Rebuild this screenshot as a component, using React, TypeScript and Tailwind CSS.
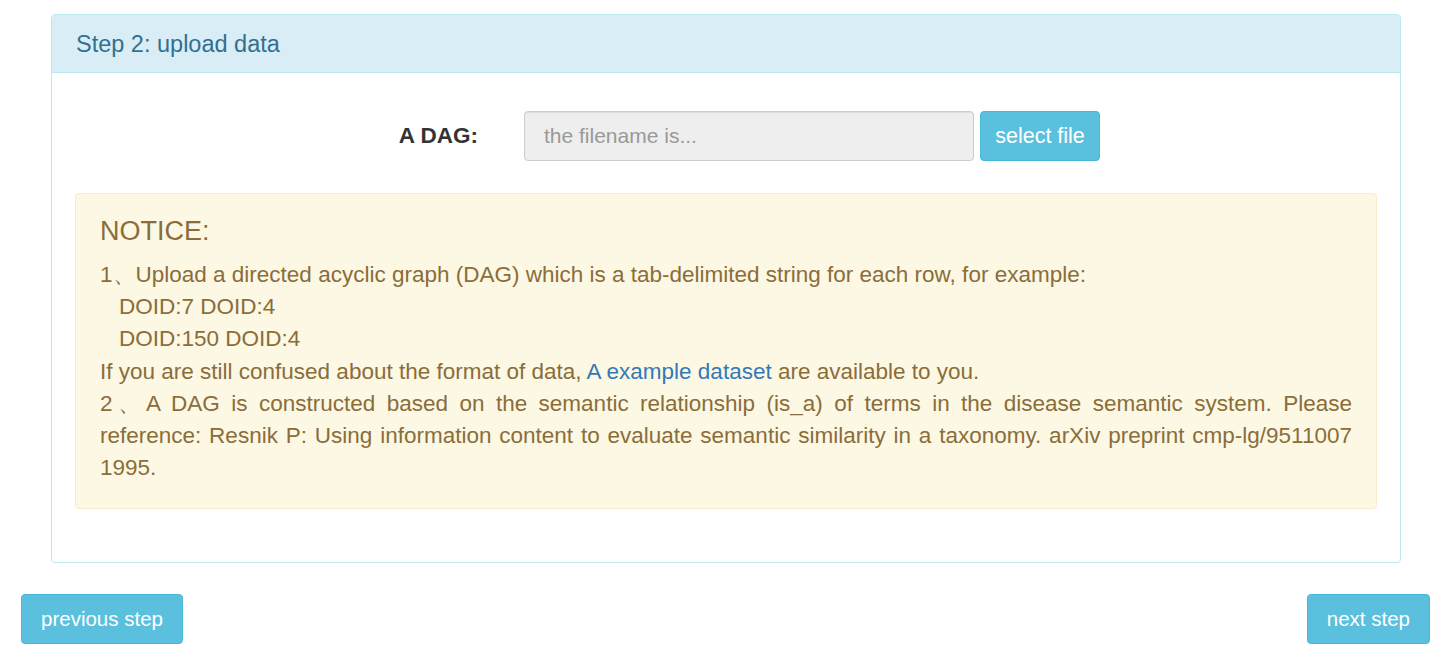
const noticeLines = [
  "DOID:7 DOID:4",
  "DOID:150 DOID:4",
];

export default function App() {
  return (
    <div className="min-h-screen bg-white font-['Liberation_Sans',Arial,sans-serif] text-[#333]">
      <div className="pl-[51px] pr-[37px] pt-[14px]">
        <div className="rounded-[4px] border border-[#bce8f1] bg-white">
          <div className="h-[58px] rounded-t-[3px] border-b border-[#bce8f1] bg-[#d9edf7] px-6 pt-[2px] flex items-center">
            <h3 className="text-[23.5px] text-[#31708f]">Step 2: upload data</h3>
          </div>
          <div className="px-[23px] pt-[38px] pb-[53px]">
            <div className="flex items-center">
              <label className="w-[425px] pr-[22px] text-right text-[22.5px] font-bold text-[#333]">
                A DAG:
              </label>
              <div className="ml-[24px] flex">
                <input
                  readOnly
                  placeholder="the filename is..."
                  className="h-[50px] w-[450px] rounded-[4px] border border-[#ccc] bg-[#eee] px-[19px] text-[21px] placeholder:text-[#999] shadow-[inset_0_1px_1px_rgba(0,0,0,0.075)] outline-none"
                />
                <button className="ml-[6px] h-[50px] w-[120px] rounded-[4px] border border-[#46b8da] bg-[#5bc0de] text-[21.5px] text-white">
                  select file
                </button>
              </div>
            </div>
            <div className="mt-[32px] rounded-[4px] border border-[#faebcc] bg-[#fcf8e3] px-6 pt-[17px] pb-[24px] text-[22.5px] leading-[32.2px] text-[#8a6d3b]">
              <h4 className="mb-[8px] text-[27px] leading-[40px]">NOTICE:</h4>
              <p>
                1、Upload a directed acyclic graph (DAG) which is a tab-delimited string for each row, for example:
              </p>
              {noticeLines.map((line) => (
                <p key={line} className="pl-[19px]">
                  {line}
                </p>
              ))}
              <p>
                If you are still confused about the format of data,{" "}
                <a href="#" className="text-[#337ab7]">
                  A example dataset
                </a>{" "}
                are available to you.
              </p>
              <p className="text-justify">
                2、A DAG is constructed based on the semantic relationship (is_a) of terms in the disease semantic
                system. Please reference: Resnik P: Using information content to evaluate semantic similarity in a
                taxonomy. arXiv preprint cmp-lg/9511007 1995.
              </p>
            </div>
          </div>
        </div>
      </div>
      <div className="mt-[31px] flex justify-between pl-[21px] pr-[8px]">
        <button className="h-[50px] rounded-[4px] border border-[#46b8da] bg-[#5bc0de] px-[19px] text-[20.5px] text-white">
          previous step
        </button>
        <button className="h-[50px] rounded-[4px] border border-[#46b8da] bg-[#5bc0de] px-[19px] text-[20.5px] text-white">
          next step
        </button>
      </div>
    </div>
  );
}
